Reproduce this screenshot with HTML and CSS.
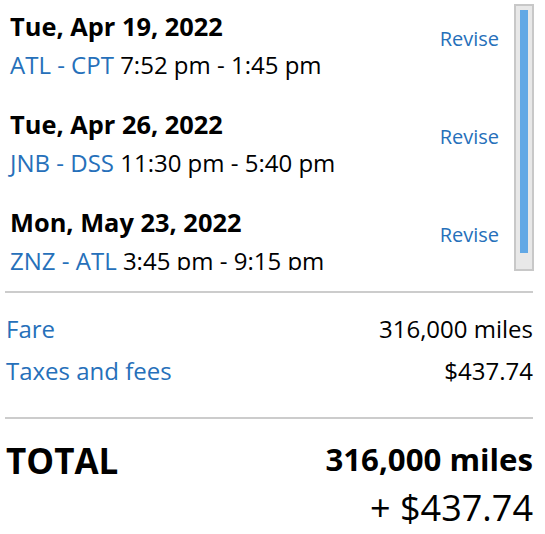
FILE: index.html
```html
<!DOCTYPE html>
<html>
<head>
<meta charset="utf-8">
<link rel="stylesheet" href="styles.css">
</head>
<body>
<div class="summary">
  <div class="trips-wrap">
    <div class="trips">
      <div class="trip">
        <div class="trip-info">
          <div class="date">Tue, Apr 19, 2022</div>
          <div class="route"><span class="link">ATL - CPT</span> 7:52 pm - 1:45 pm</div>
        </div>
        <a class="revise">Revise</a>
      </div>
      <div class="trip">
        <div class="trip-info">
          <div class="date">Tue, Apr 26, 2022</div>
          <div class="route"><span class="link">JNB - DSS</span> 11:30 pm - 5:40 pm</div>
        </div>
        <a class="revise">Revise</a>
      </div>
      <div class="trip">
        <div class="trip-info">
          <div class="date">Mon, May 23, 2022</div>
          <div class="route"><span class="link">ZNZ - ATL</span> 3:45 pm - 9:15 pm</div>
        </div>
        <a class="revise">Revise</a>
      </div>
    </div>
    <div class="scrollbar"><div class="thumb"></div></div>
  </div>
  <div class="costs">
    <div class="cost-row"><span class="link">Fare</span><span>316,000 miles</span></div>
    <div class="cost-row"><span class="link">Taxes and fees</span><span>$437.74</span></div>
  </div>
  <div class="total">
    <div class="total-label">TOTAL</div>
    <div class="total-value">
      <div class="miles">316,000 miles</div>
      <div class="cash">+ $437.74</div>
    </div>
  </div>
</div>
</body>
</html>
```

FILE: styles.css
```css
* { box-sizing: border-box; }
body {
  margin: 0;
  background: #fff;
  font-family: "Open Sans", "Noto Sans", sans-serif;
  color: #000;
}
.summary {
  width: 545px;
  padding: 0 12px 0 5px;
}
.trips-wrap {
  display: flex;
  align-items: flex-start;
  height: 271px;
}
.trips {
  flex: 1;
  padding: 9px 16px 0 5px;
  height: 270px;
  overflow: hidden;
}
.trip {
  display: flex;
  justify-content: space-between;
  align-items: flex-start;
  margin-bottom: 20px;
}
.date {
  font-weight: 700;
  font-size: 25.4px;
  line-height: 34px;
}
.route {
  font-size: 24px;
  line-height: 44px;
}
.link { color: #2670ba; }
.revise {
  color: #2670ba;
  font-size: 20px;
  line-height: 28px;
  margin-top: 16px;
  margin-right: -1px;
}
.scrollbar {
  width: 20px;
  height: 267px;
  margin-top: 4px;
  margin-right: -1px;
  border: 2px solid #c8c8c8;
  background: #e8e8e8;
  padding: 4px 4px 0 4px;
}
.thumb {
  width: 8px;
  height: 243px;
  background: #62a8e5;
}
.costs {
  border-top: 2px solid #cccccc;
  border-bottom: 2px solid #cccccc;
  margin-top: 20px;
  padding: 15px 0 25px 1px;
}
.cost-row {
  display: flex;
  justify-content: space-between;
  font-size: 24px;
  line-height: 42px;
}
.total {
  display: flex;
  justify-content: space-between;
  align-items: flex-start;
  padding-top: 18px;
}
.total-label {
  font-weight: 700;
  font-size: 35px;
  line-height: 48px;
  padding-left: 1px;
}
.total-value { text-align: right; }
.miles {
  font-weight: 700;
  font-size: 31.2px;
  line-height: 45px;
}
.cash {
  font-size: 36px;
  line-height: 52px;
}
```
